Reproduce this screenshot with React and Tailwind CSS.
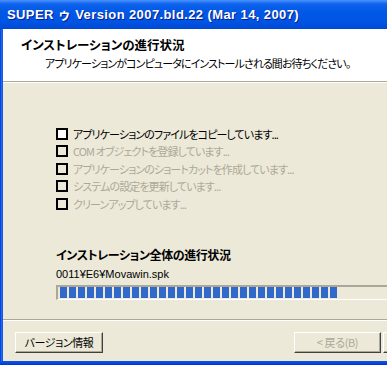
import React from 'react';

const jp = "font-['Noto_Sans_CJK_JP','Noto_Sans',sans-serif] [font-feature-settings:'palt']";

const steps = [
  { label: 'アプリケーションのファイルをコピーしています...', active: true },
  { label: 'COM オブジェクトを登録しています...' },
  { label: 'アプリケーションのショートカットを作成しています...' },
  { label: 'システムの設定を更新しています...' },
  { label: 'クリーンアップしています...' },
];

const Button = ({ children, disabled, className = '' }) => (
  <div
    className={`h-[21px] shrink-0 flex items-center justify-center bg-[#ECE9D8] border border-t-white border-l-white border-r-[#404040] border-b-[#404040] shadow-[inset_-1px_-1px_0_#ACA899] text-[11px] tracking-[-0.4px] whitespace-nowrap ${jp} ${disabled ? 'text-[#ACA899]' : 'text-black'} ${className}`}
  >
    {children}
  </div>
);

export default function App() {
  return (
    <div className="w-[387px] h-[365px] overflow-hidden flex flex-col bg-[#ECE9D8]">
      {/* title bar */}
      <div className="h-[29px] shrink-0 flex items-center pl-[7px] bg-[linear-gradient(to_bottom,#4A92FF_0px,#0E63EC_4px,#0058E6_12px,#0054E3_22px,#0048D4_29px)]">
        <span className="text-white font-bold text-[13px] tracking-[0.4px] whitespace-nowrap [text-shadow:1px_1px_0_#0A1C8C] font-['Liberation_Sans','Noto_Sans_CJK_JP',sans-serif]">
          SUPER ゥ Version 2007.bld.22 (Mar 14, 2007)
        </span>
      </div>

      <div className="flex flex-1 min-h-0">
        {/* left frame */}
        <div className="w-[3px] shrink-0 bg-[linear-gradient(to_right,#0831D9,#1C68EE,#0A58E0)]" />

        <div className="flex-1 flex flex-col min-w-0">
          {/* header */}
          <div className="h-[52px] shrink-0 bg-white pl-[18px] pt-[8px] whitespace-nowrap">
            <div className={`text-[12.5px] leading-[16px] font-bold tracking-[0px] text-black ${jp}`}>インストレーションの進行状況</div>
            <div className={`mt-[3px] pl-[24px] text-[11px] leading-[15px] tracking-[-0.9px] text-black ${jp}`}>
              アプリケーションがコンピュータにインストールされる間お待ちください。
            </div>
          </div>
          <div className="h-px bg-[#ACA899]" />
          <div className="h-px bg-white" />

          {/* body */}
          <div className="h-[236px] shrink-0 pl-[53px] overflow-hidden whitespace-nowrap">
            <div className="mt-[42px] flex flex-col">
              {steps.map((s, i) => (
                <div key={i} className="h-[17.5px] flex items-center gap-[5px]">
                  <div className={`w-[12px] h-[12px] border-2 border-black ${s.active ? 'bg-white' : ''}`} />
                  <span className={`text-[11px] leading-[14px] tracking-[-0.9px] ${jp} ${s.active ? 'text-black' : 'text-[#ACA899]'}`}>{s.label}</span>
                </div>
              ))}
            </div>

            <div className={`mt-[34px] text-[12px] leading-[16px] font-bold tracking-[-0.4px] text-black ${jp}`}>インストレーション全体の進行状況</div>
            <div className="mt-[4px] text-[11px] leading-[14px] text-black font-['Liberation_Sans',sans-serif]">0011¥E6¥Movawin.spk</div>

            <div className="mt-[4px] w-[360px] h-[15px] border-t-2 border-l-2 border-b border-t-[#ACA899] border-l-[#ACA899] border-b-white flex items-start gap-[2px] pl-[2px]">
              {Array.from({ length: 31 }).map((_, i) => (
                <div key={i} className="w-[7px] h-[11px] bg-[#3169CB] shrink-0" />
              ))}
            </div>
          </div>

          <div className="h-px bg-[#ACA899]" />
          <div className="h-px bg-white" />

          {/* buttons */}
          <div className="flex-1 flex items-start pt-[11px] pl-[12px]">
            <Button className="w-[88px]">バージョン情報</Button>
            <Button disabled className="w-[87px] ml-[191px]">&lt; 戻る(B)</Button>
            <Button className="w-[87px] ml-[2px]" />
          </div>
        </div>
      </div>

      {/* bottom frame */}
      <div className="h-[4px] shrink-0 bg-[linear-gradient(to_bottom,#0A58E0,#0831D9)]" />
    </div>
  );
}
